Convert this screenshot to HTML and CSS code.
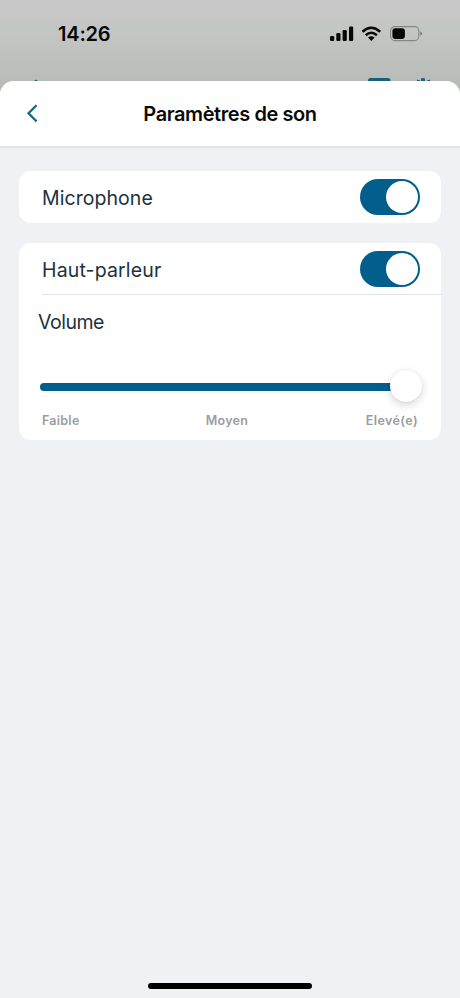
FILE: index.html
```html
<!DOCTYPE html>
<html lang="fr">
<head>
<meta charset="utf-8">
<title>Paramètres de son</title>
<link rel="stylesheet" href="styles.css">
</head>
<body>
<div class="screen">
  <header class="status">
    <span class="time">14:26</span>
    <svg class="indicators" width="94" height="20" viewBox="0 0 94 20">
      <rect x="0" y="12" width="4.2" height="5" rx="1.2"/>
      <rect x="6.3" y="9" width="4.2" height="8" rx="1.2"/>
      <rect x="12.6" y="6" width="4.2" height="11" rx="1.2"/>
      <rect x="19" y="2.5" width="4.2" height="14.5" rx="1.2"/>
      <g fill="none" stroke="#080808" stroke-width="2.5">
        <path d="M32.4 7.7Q41.3-.3 50.2 7.7"/>
        <path d="M35.7 11.2Q41.3 6.2 46.9 11.2"/>
      </g>
      <path d="M38 13.5Q41.3 10.8 44.6 13.5L41.3 17Z"/>
      <rect x="60.6" y="2.6" width="28.2" height="14" rx="4.4" fill="none" stroke="#858785" stroke-width="1.1"/>
      <rect x="62.4" y="4.3" width="12.5" height="10.6" rx="2.8"/>
      <path d="M90.3 7.5Q92.1 8.2 92.1 9.6Q92.1 11 90.3 11.7Z" fill="#777977"/>
    </svg>
  </header>
  <svg class="behind" width="460" height="5" viewBox="0 0 460 5">
    <path d="M34 5L36.2 3.400L37.5 5Z"/>
    <path d="M368 5V4.5Q368 2 370.5 2H388Q390.500 2 390.500 4.500V5Z"/>
    <path d="M417 5V3.500L420 4.500V5ZM421 5V2.500Q423 1.500 425 2.500V5ZM427 5V4.500L430 3.500V5Z"/>
  </svg>
  <main class="sheet">
    <div class="navbar">
      <svg class="back" width="14" height="20" viewBox="0 0 14 20"><path d="M11.600 1.200L3.500 9.300L11.600 17.400"/></svg>
      <h1>Paramètres de son</h1>
    </div>
    <section class="card">
      <div class="row"><span class="label mic">Microphone</span><span class="toggle"><i></i></span></div>
    </section>
    <section class="card">
      <div class="row"><span class="label speaker">Haut-parleur</span><span class="toggle"><i></i></span></div>
      <div class="divider"></div>
      <div class="label volume">Volume</div>
      <div class="slider"><span class="track"></span><span class="thumb"></span></div>
      <div class="scale"><span>Faible</span><span class="mid">Moyen</span><span class="high">Elevé(e)</span></div>
    </section>
    <div class="home"></div>
  </main>
</div>
</body>
</html>
```

FILE: styles.css
```css
* { box-sizing: border-box; }
body { margin: 0; font-family: Inter, "Liberation Sans", sans-serif; }
.screen {
  width: 460px;
  height: 998px;
  display: flex;
  flex-direction: column;
  overflow: hidden;
  background: linear-gradient(#c8c7c8 0, #c4c6c3 30px, #b8bdb8 82px, #b8bdb8 100%);
}
.status {
  height: 76px;
  flex: none;
  display: flex;
  justify-content: space-between;
  align-items: flex-start;
  padding: 22px 36px 0 58px;
  color: #080808;
}
.time { font-size: 20px; line-height: 24px; font-weight: 600; letter-spacing: -.2px; }
.indicators { margin-top: 2px; fill: #080808; }
.behind { display: block; flex: none; fill: #176178; }
.sheet {
  flex: 1;
  display: flex;
  flex-direction: column;
  background: #eff1f5;
  border-radius: 14px 14px 0 0;
  overflow: hidden;
}
.navbar {
  height: 67px;
  flex: none;
  display: grid;
  grid-template-columns: 1fr auto 1fr;
  align-items: center;
  padding: 0 25px;
  background: #fff;
  border-bottom: 2px solid #e2e6ea;
}
.back { fill: none; stroke: #16688c; stroke-width: 2.300; }
h1 { margin: 0; font-size: 20px; line-height: 24px; font-weight: 600; letter-spacing: -.42px; color: #0a0a0a; }
.card {
  width: 422px;
  margin: 23px 0 0 19px;
  border-radius: 12px;
  background: #fff;
}
.card + .card { margin-top: 20px; height: 197px; }
.row {
  height: 52px;
  display: flex;
  align-items: center;
  justify-content: space-between;
  padding: 0 21px 0 23px;
}
.label { font-size: 19.5px; line-height: 24px; color: #1c313d; }
.mic { letter-spacing: .06px; padding-top: 1px; }
.speaker { letter-spacing: .15px; padding-top: 1px; }
.toggle {
  width: 60px;
  height: 36px;
  padding: 2px;
  display: flex;
  justify-content: flex-end;
  border-radius: 18px;
  background: #025f8b;
}
.toggle i { width: 32px; height: 32px; border-radius: 50%; background: #fff; }
.divider { height: 1px; margin: -1px 0 0 23px; background: #dfe3e6; }
.volume { margin: 15px 0 0 19px; letter-spacing: -.5px; }
.slider { height: 32px; display: flex; align-items: center; margin: 36px 19px 0 21px; }
.track { flex: 1; height: 8px; margin: 1px -4px 0 0; border-radius: 4px; background: #025f8b; }
.thumb { width: 32px; height: 32px; border-radius: 50%; background: #fff; box-shadow: 0 3px 8px rgba(0,0,0,.16), 0 0 2px rgba(0,0,0,.1); }
.scale {
  display: grid;
  grid-template-columns: 1fr auto 1fr;
  padding: 10px 23px 0;
  font-size: 12.5px;
  line-height: 18px;
  font-weight: 600;
  letter-spacing: .25px;
  color: #9a9ca1;
}
.mid { margin-right: 6px; }
.high { text-align: right; letter-spacing: .4px; }
.home { width: 164px; height: 6px; margin: auto auto 9px 148px; border-radius: 3px; background: #000; }
```
